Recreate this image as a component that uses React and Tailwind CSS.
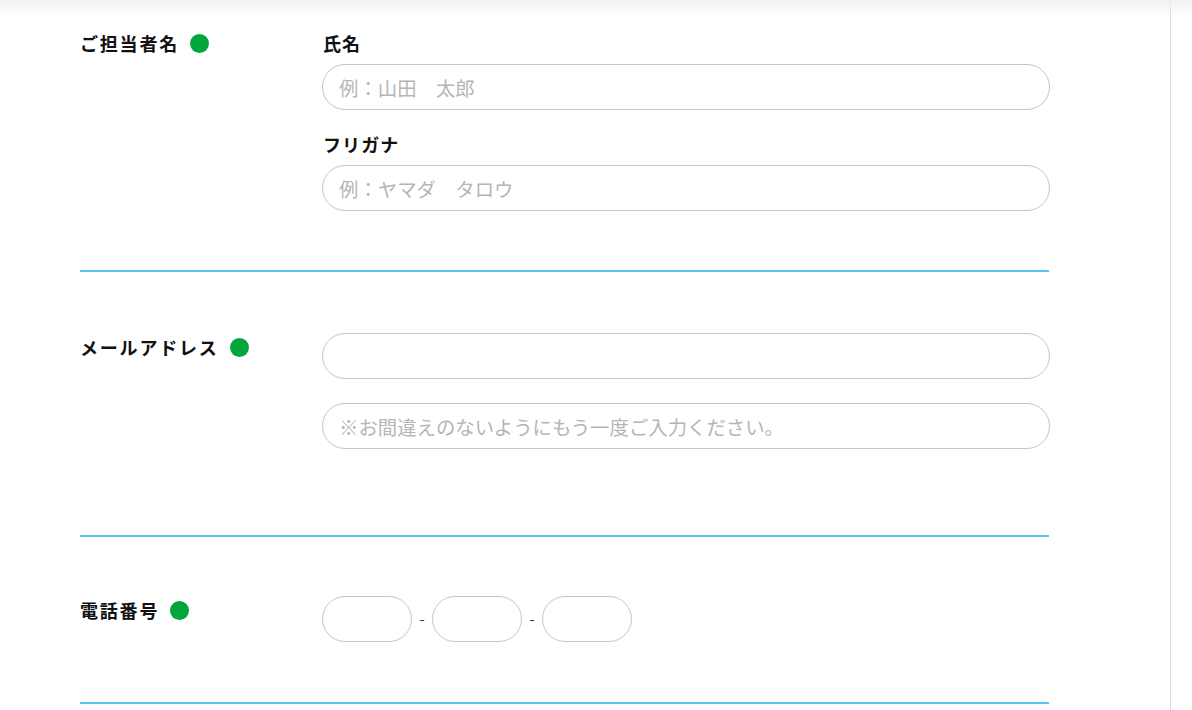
export default function App() {
  const font = { fontFamily: '"Noto Sans CJK JP", "Noto Sans", sans-serif' };
  const Dot = () => <span className="inline-block w-[19px] h-[19px] rounded-full bg-[#00a63c] ml-[11px] shrink-0" />;
  const Label = ({ children }) => (
    <div className="w-[242px] shrink-0 flex items-center h-[24px] text-[18px] font-bold text-[#111] tracking-[0.1em]">
      <span>{children}</span>
      <Dot />
    </div>
  );
  const Input = ({ placeholder, className = "" }) => (
    <input
      placeholder={placeholder}
      className={"h-[46px] rounded-full border border-[#c4c7c2] bg-white px-[16px] text-[19.4px] placeholder:text-[#b5b5b5] outline-none " + className}
      style={font}
    />
  );
  return (
    <div className="relative w-[1192px] h-[710px] overflow-hidden bg-white flex" style={font}>
      <div className="absolute top-0 left-0 right-0 h-[16px] bg-gradient-to-b from-[#f1f1f1] to-white/0 pointer-events-none" />
      <div className="w-[1170px] shrink-0 pl-[80px]">
        <div className="w-[969px]">
          {/* Section 1 */}
          <div className="flex pt-[31px] pb-[59px] border-b-2 border-[#55c6f3]">
            <Label>ご担当者名</Label>
            <div className="flex flex-col flex-1">
              <div className="h-[24px] flex items-center text-[18px] font-bold text-[#111] tracking-[0.06em] pl-[1px]">氏名</div>
              <Input placeholder="例：山田　太郎" className="mt-[9px] w-[728px]" />
              <div className="h-[24px] flex items-center text-[18px] font-bold text-[#111] tracking-[0.06em] pl-[1px] mt-[22px]">フリガナ</div>
              <Input placeholder="例：ヤマダ　タロウ" className="mt-[9px] w-[728px]" />
            </div>
          </div>
          {/* Section 2 */}
          <div className="flex pt-[61px] pb-[86px] border-b-2 border-[#55c6f3]">
            <div className="pt-[2px]"><Label>メールアドレス</Label></div>
            <div className="flex flex-col flex-1 gap-[24px]">
              <Input className="w-[728px]" />
              <Input placeholder="※お間違えのないようにもう一度ご入力ください。" className="w-[728px]" />
            </div>
          </div>
          {/* Section 3 */}
          <div className="flex pt-[59px] pb-[60px] border-b-2 border-[#55c6f3]">
            <div className="pt-[2px]"><Label>電話番号</Label></div>
            <div className="flex items-center flex-1">
              <Input className="w-[90px]" />
              <span className="w-[20px] text-center text-[15px] text-[#333]">-</span>
              <Input className="w-[90px]" />
              <span className="w-[20px] text-center text-[15px] text-[#333]">-</span>
              <Input className="w-[90px]" />
            </div>
          </div>
        </div>
      </div>
      <div className="flex-1 border-l border-[#d9d9d9] bg-white" />
    </div>
  );
}
